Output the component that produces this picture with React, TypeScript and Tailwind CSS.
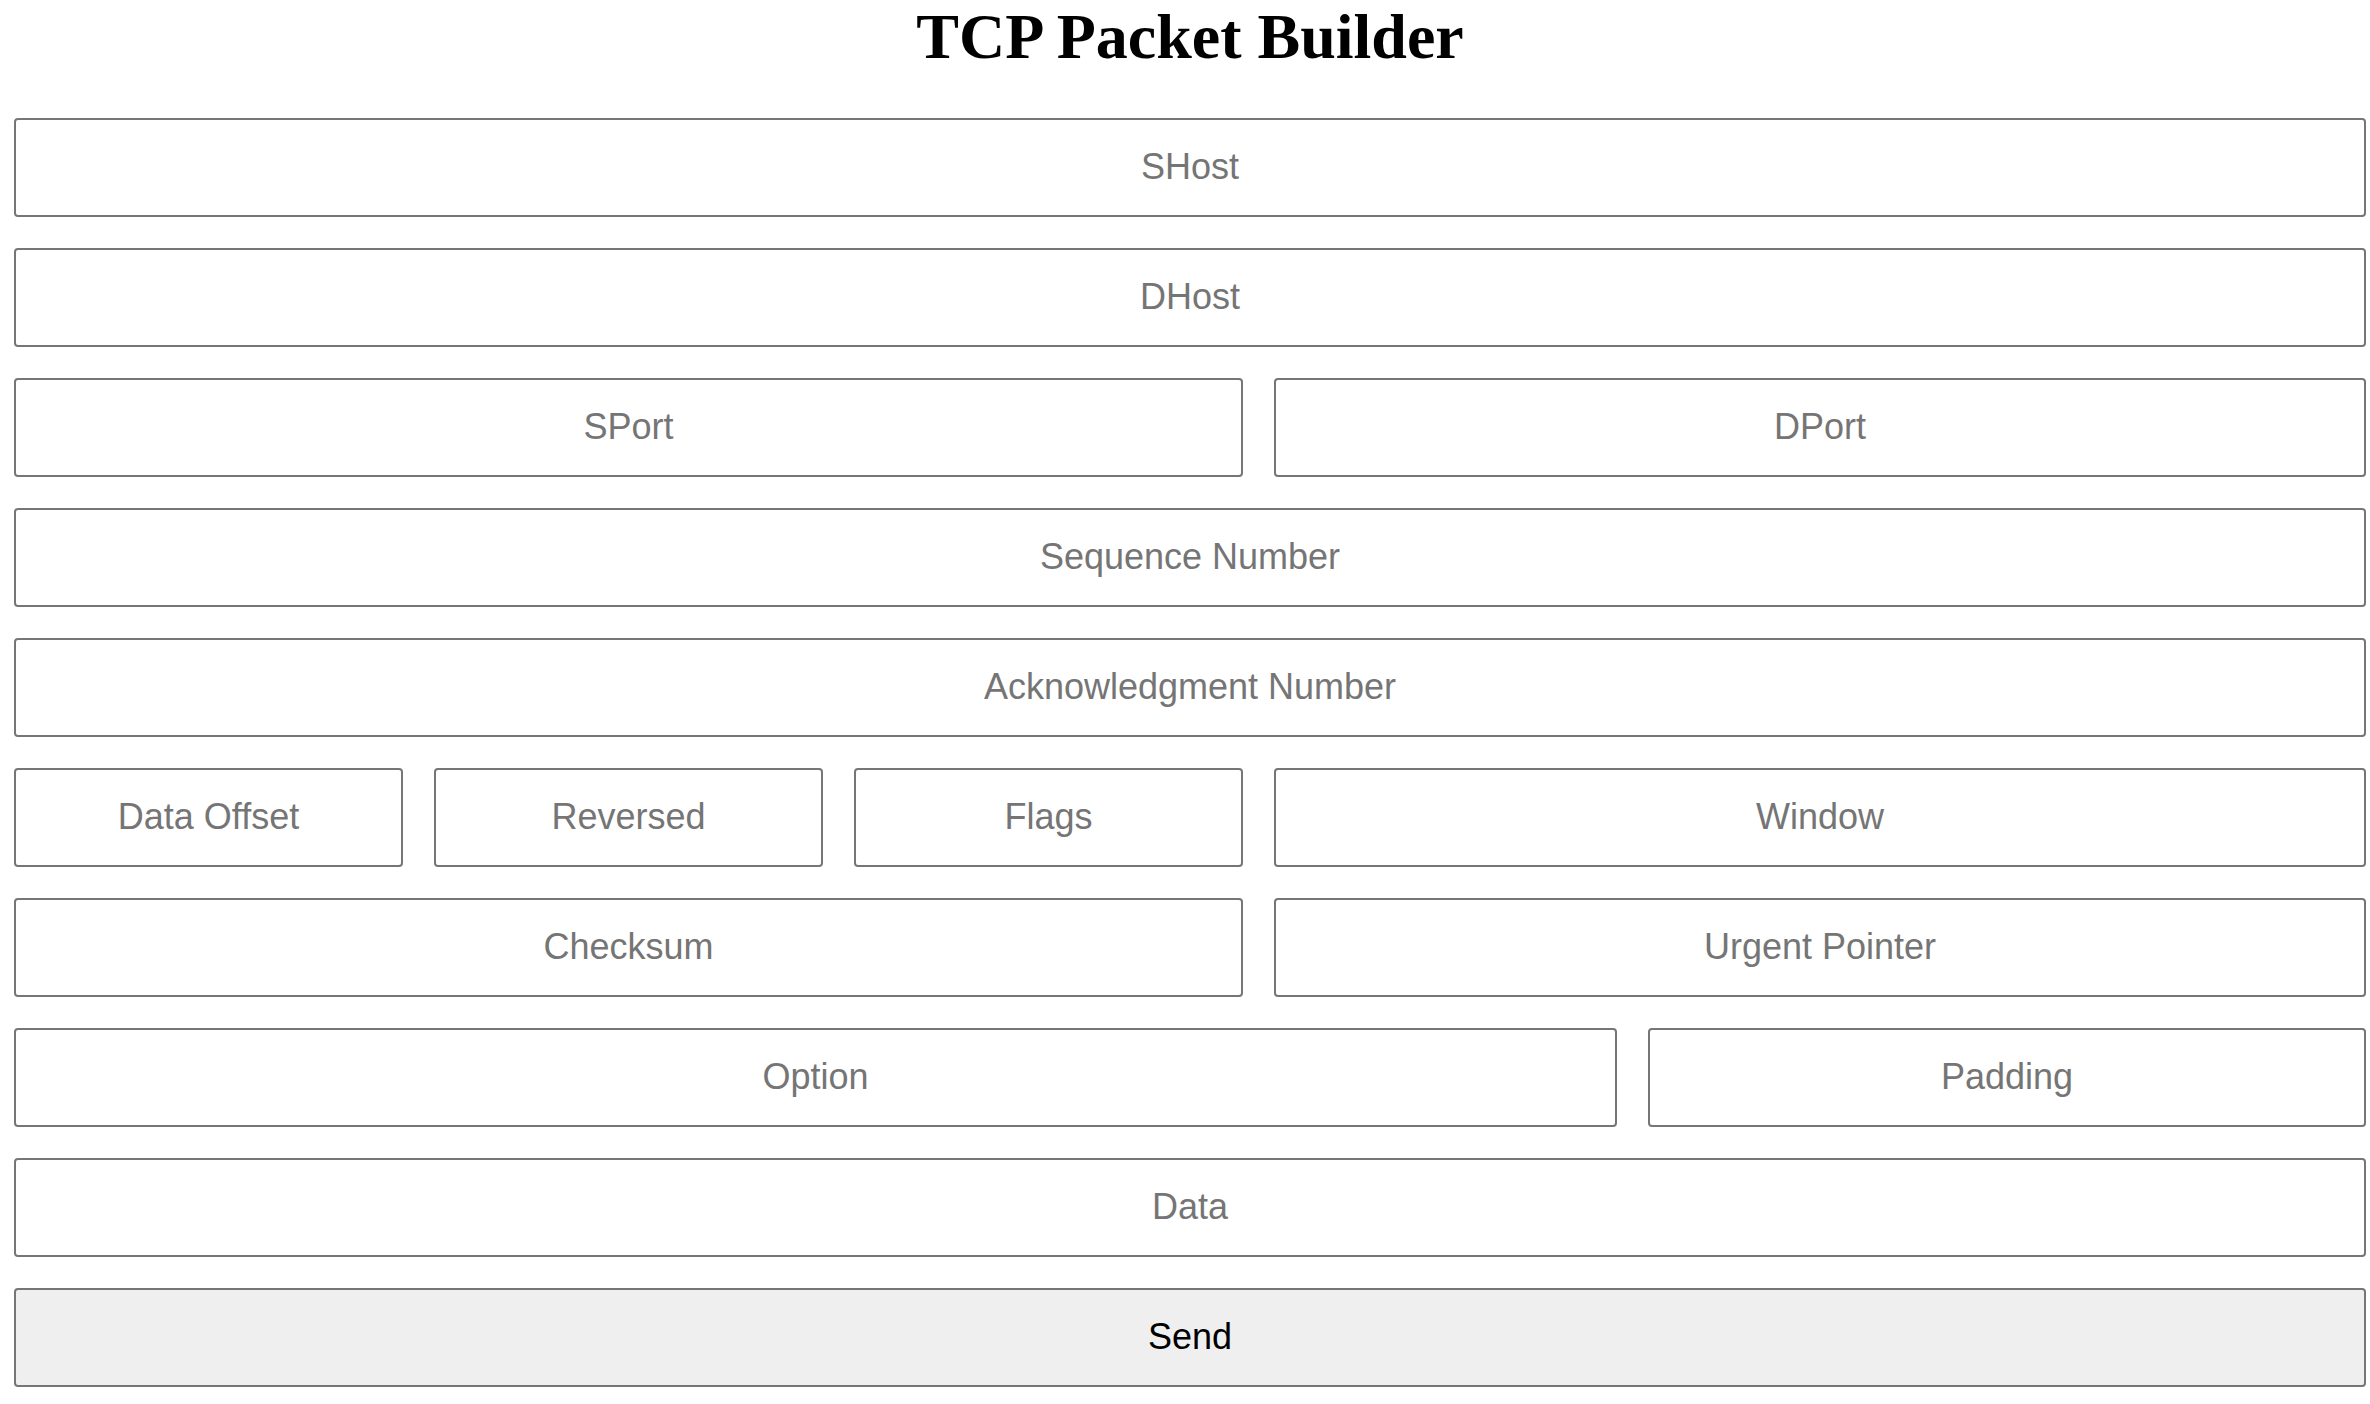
import React from "react";

const fieldClass =
  "h-[99px] min-w-0 rounded-[4px] border-2 border-[#767676] bg-white px-2 pb-[2px] text-center text-[36px] text-black placeholder:text-[#757575] font-['Liberation_Sans',Arial,sans-serif] outline-none";

function Field({ placeholder, className = "" }: { placeholder: string; className?: string }) {
  return <input type="text" placeholder={placeholder} className={`${fieldClass} ${className}`} />;
}

export default function App() {
  return (
    <div className="min-h-screen bg-white">
      <div className="ml-[14px] w-[2352px]">
        {/* Title */}
        <h1 className="pt-[5px] text-center font-['Liberation_Serif','Times_New_Roman',serif] text-[64px] font-bold leading-[64px] text-black">
          TCP Packet Builder
        </h1>

        {/* Form */}
        <form className="mt-[49px] flex flex-col gap-[31px]" onSubmit={(e) => e.preventDefault()}>
          <Field placeholder="SHost" className="w-full" />
          <Field placeholder="DHost" className="w-full" />

          <div className="flex gap-[31px]">
            <Field placeholder="SPort" className="w-[1229px] shrink-0" />
            <Field placeholder="DPort" className="flex-1" />
          </div>

          <Field placeholder="Sequence Number" className="w-full" />
          <Field placeholder="Acknowledgment Number" className="w-full" />

          <div className="flex gap-[31px]">
            <div className="flex w-[1229px] shrink-0 gap-[31px]">
              <Field placeholder="Data Offset" className="flex-1" />
              <Field placeholder="Reversed" className="flex-1" />
              <Field placeholder="Flags" className="flex-1" />
            </div>
            <Field placeholder="Window" className="flex-1" />
          </div>

          <div className="flex gap-[31px]">
            <Field placeholder="Checksum" className="w-[1229px] shrink-0" />
            <Field placeholder="Urgent Pointer" className="flex-1" />
          </div>

          <div className="flex gap-[31px]">
            <Field placeholder="Option" className="w-[1603px] shrink-0" />
            <Field placeholder="Padding" className="flex-1" />
          </div>

          <Field placeholder="Data" className="w-full" />

          <button
            type="submit"
            className="h-[99px] w-full rounded-[4px] border-2 border-[#767676] bg-[#efefef] pb-[2px] text-center font-['Liberation_Sans',Arial,sans-serif] text-[36px] text-black"
          >
            Send
          </button>
        </form>
      </div>
    </div>
  );
}
